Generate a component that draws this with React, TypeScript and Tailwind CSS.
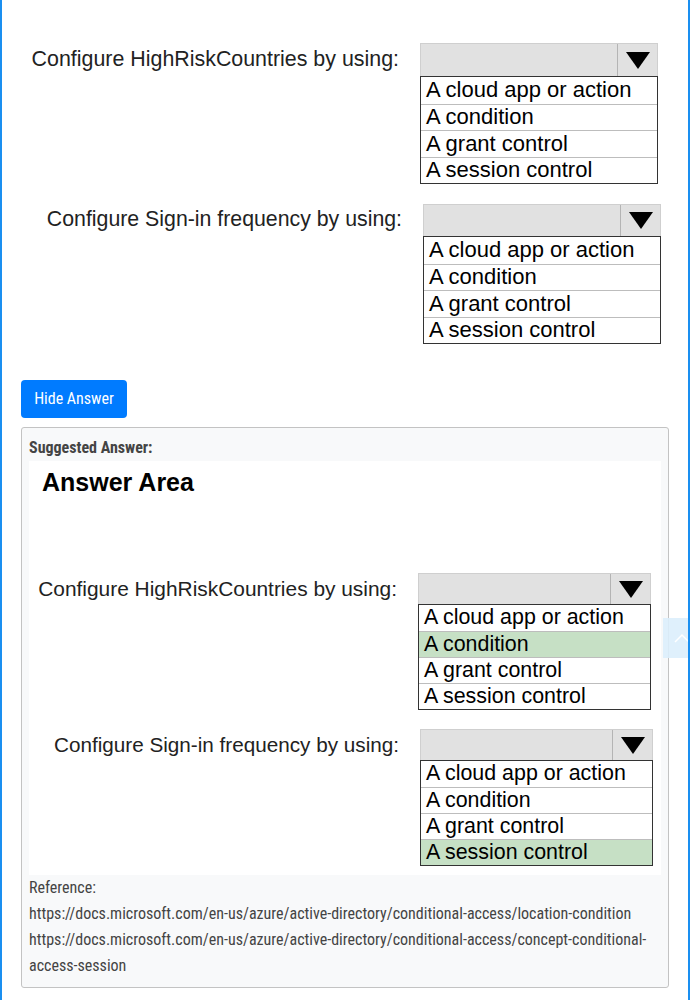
const OPTIONS = ["A cloud app or action", "A condition", "A grant control", "A session control"];

const siteFont = { fontFamily: "'Roboto Condensed', 'Liberation Sans Narrow', Roboto, sans-serif" };

function Triangle() {
  return (
    <svg width="24" height="17" viewBox="0 0 24 17">
      <path d="M0 0 H24 L12 17 Z" fill="#000" />
    </svg>
  );
}

type DropProps = { width: number; headH: number; rowH: number; optSize: number; picked?: number };

function Dropdown({ width, headH, rowH, optSize, picked }: DropProps) {
  return (
    <div style={{ width }} className="font-['Liberation_Sans',Arial,sans-serif]">
      <div style={{ height: headH }} className="flex bg-[#e1e1e1] border border-[#cfcfcf] border-b-0">
        <div className="flex-1" />
        <div className="w-[40px] border-l border-[#b4b4b4] flex items-center justify-center">
          <Triangle />
        </div>
      </div>
      <div className="border-[1.5px] border-[#333] bg-white">
        {OPTIONS.map((o, i) => (
          <div
            key={o}
            style={{ height: rowH, fontSize: optSize }}
            className={`flex items-center pl-[5px] text-black leading-none whitespace-nowrap ${i > 0 ? "border-t border-[#bdbdbd]" : ""} ${picked === i ? "bg-[#c6e0c5]" : ""}`}
          >
            {o}
          </div>
        ))}
      </div>
    </div>
  );
}

function QuestionRow({ label, labelW, labelSize, ...drop }: DropProps & { label: string; labelW: number; labelSize: number }) {
  return (
    <div className="flex items-start">
      <div
        style={{ width: labelW, height: drop.headH, fontSize: labelSize }}
        className="flex items-center justify-end pr-[21px] font-['Liberation_Sans',Arial,sans-serif] text-[#222] whitespace-nowrap"
      >
        {label}
      </div>
      <Dropdown {...drop} />
    </div>
  );
}

export default function App() {
  return (
    <div className="relative h-[1000px] overflow-hidden bg-white border-x-2 border-[#1a8ff0]">
      {/* question image */}
      <div className="pt-[43px] flex flex-col gap-[20px]">
        <QuestionRow label="Configure HighRiskCountries by using:" labelW={418} labelSize={21.4} headH={33} width={238} rowH={26.5} optSize={22} />
        <QuestionRow label="Configure Sign-in frequency by using:" labelW={421} labelSize={21.3} headH={32} width={238} rowH={26.5} optSize={22} />
      </div>

      <div className="pl-[19px]" style={siteFont}>
        <button className="mt-[36px] w-[106px] h-[38px] rounded-[4px] bg-[#007bff] text-white text-[16px]">
          Hide Answer
        </button>

        <div className="mt-[9px] w-[648px] border border-[#c3c3c3] rounded-[3px] bg-[#f8f9fa] px-[7px] pt-[9px] pb-[8px]">
          <div className="text-[16px] leading-[21px] font-bold text-[#444] mb-[3px]">Suggested Answer:</div>

          <div className="bg-white h-[414px] pt-[7px]">
            <div className="pl-[13px] font-['Liberation_Sans',Arial,sans-serif] font-bold text-[25px] leading-[29px] text-black">
              Answer Area
            </div>
            <div className="mt-[76px] flex flex-col gap-[19px]">
              <QuestionRow label="Configure HighRiskCountries by using:" labelW={389} labelSize={20.9} headH={31} width={233} rowH={26} optSize={21.4} picked={1} />
              <QuestionRow label="Configure Sign-in frequency by using:" labelW={391} labelSize={20.7} headH={31} width={233} rowH={26} optSize={21.4} picked={3} />
            </div>
          </div>

          <div className="text-[16px] leading-[26px] text-[#444]">
            <div>Reference:</div>
            <div>https://docs.microsoft.com/en-us/azure/active-directory/conditional-access/location-condition</div>
            <div>https://docs.microsoft.com/en-us/azure/active-directory/conditional-access/concept-conditional-access-session</div>
          </div>
        </div>
      </div>

      <div className="absolute left-[661px] top-[618px] w-[25px] h-[40px] bg-[#dbeefc]/90 flex items-center justify-end">
        <svg width="16" height="10" viewBox="0 0 16 10" className="-mr-[2px]">
          <path d="M1 9 L8 2 L15 9" stroke="#fff" strokeWidth="1.5" fill="none" />
        </svg>
      </div>
    </div>
  );
}
